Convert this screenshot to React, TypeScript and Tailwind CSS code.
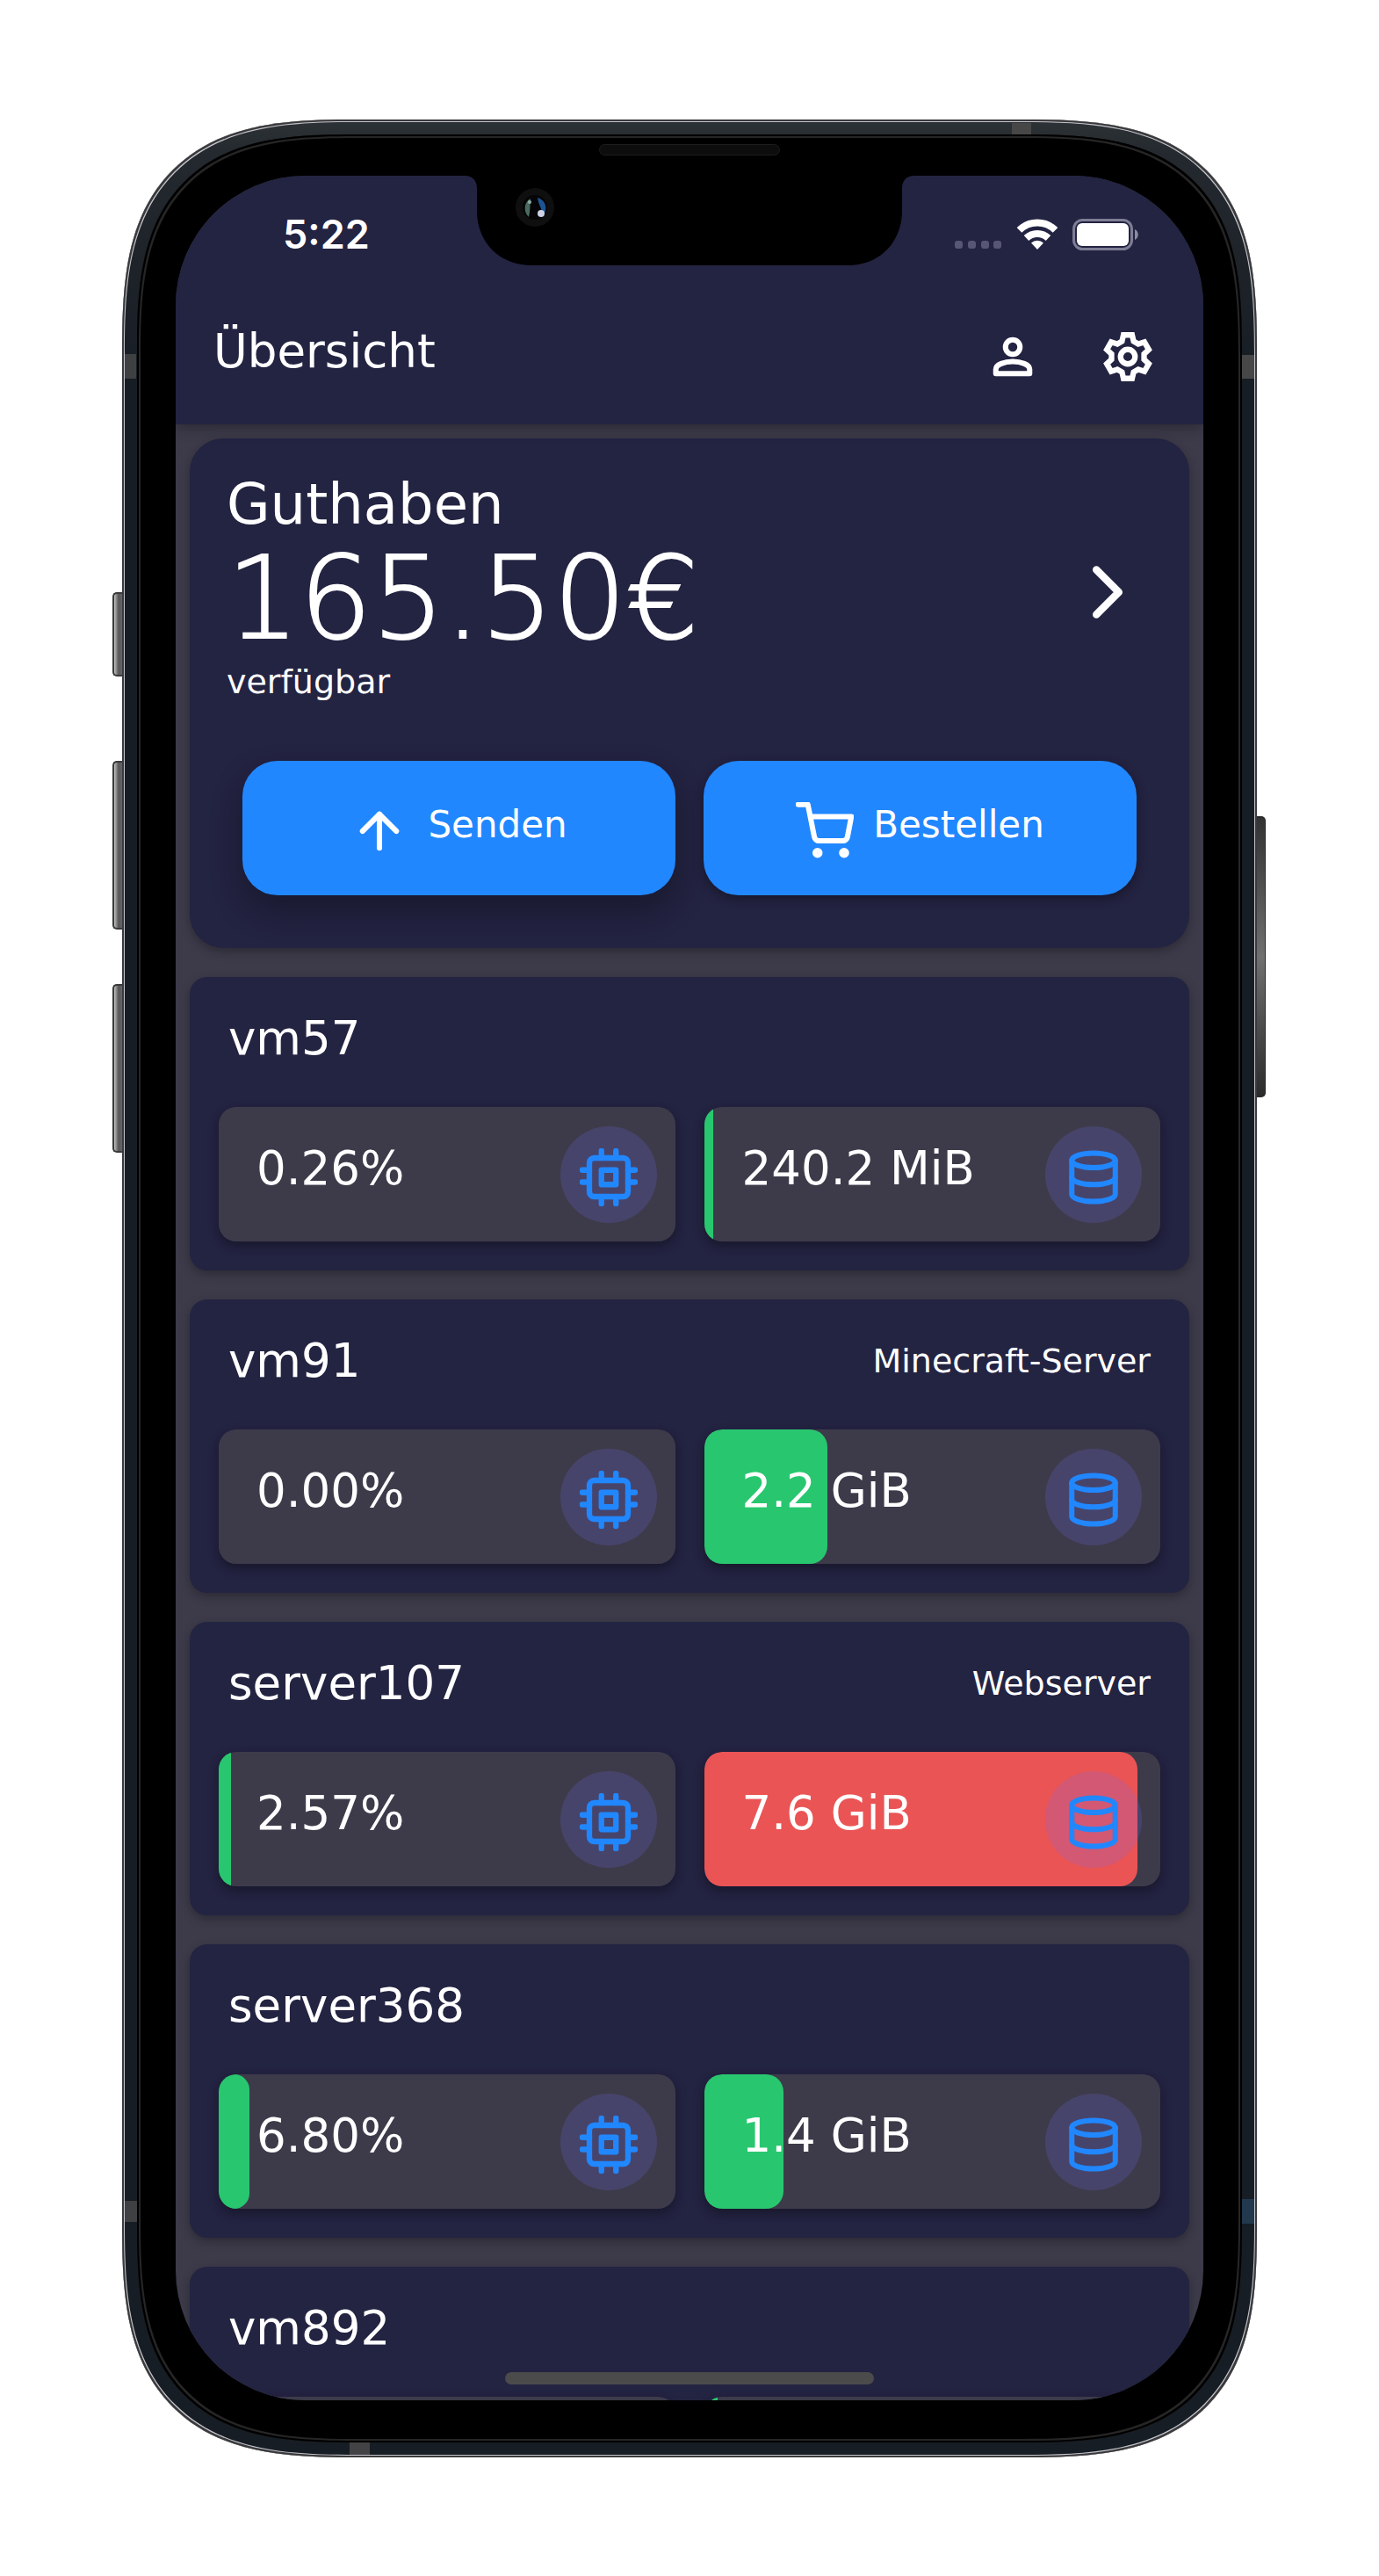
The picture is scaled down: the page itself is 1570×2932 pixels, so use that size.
import React from "react";
import { FiArrowUp, FiChevronRight, FiCpu, FiDatabase, FiShoppingCart } from "react-icons/fi";

type Metric = { value?: string; percent: number; tone?: "green" | "red" };
type Server = { name: string; note?: string; cpu: Metric; memory: Metric };

const servers: Server[] = [
  { name: "vm57", cpu: { value: "0.26%", percent: 0 }, memory: { value: "240.2 MiB", percent: 2 } },
  { name: "vm91", note: "Minecraft-Server", cpu: { value: "0.00%", percent: 0 }, memory: { value: "2.2 GiB", percent: 27 } },
  { name: "server107", note: "Webserver", cpu: { value: "2.57%", percent: 2.6 }, memory: { value: "7.6 GiB", percent: 95, tone: "red" } },
  { name: "server368", cpu: { value: "6.80%", percent: 6.8 }, memory: { value: "1.4 GiB", percent: 17.5 } },
  { name: "vm892", cpu: { percent: 0 }, memory: { percent: 3 } },
];

/* Gear outline: one tooth, repeated every 60 degrees around (12, 12). */
const tooth: [number, number][] = [
  [-2.4, -6.4],
  [-1.8, -9],
  [1.8, -9],
  [2.4, -6.4],
];
const gearPoints = [0, 60, 120, 180, 240, 300]
  .flatMap((deg) => {
    const a = (deg * Math.PI) / 180;
    return tooth.map(([x, y]) => {
      const px = 12 + x * Math.cos(a) - y * Math.sin(a);
      const py = 12 + x * Math.sin(a) + y * Math.cos(a);
      return `${px.toFixed(2)},${py.toFixed(2)}`;
    });
  })
  .join(" ");

function GearIcon() {
  return (
    <svg viewBox="0 0 24 24" className="size-[66px]" fill="none" stroke="currentColor" strokeWidth="2.3" aria-hidden="true">
      <polygon points={gearPoints} strokeLinejoin="miter" />
      <circle cx="12" cy="12" r="3" />
    </svg>
  );
}

function PersonIcon() {
  return (
    <svg viewBox="0 0 24 24" className="size-[66px]" fill="none" stroke="currentColor" strokeWidth="2.2" aria-hidden="true">
      <circle cx="12" cy="8" r="3" />
      <path d="M5 19v-1.8C5 15.2 8.6 14 12 14s7 1.2 7 3.2V19z" strokeLinejoin="round" />
    </svg>
  );
}

function StatusBar() {
  return (
    <div className="flex h-[133px] items-center justify-between pr-[74px] pl-[122px]">
      <span className="font-[Inter,sans-serif] text-[45px] leading-[54px] font-semibold">5:22</span>
      <div className="flex items-center gap-[17px]">
        <svg viewBox="0 0 54 36" className="h-[36px] w-[54px]" fill="#575775" aria-hidden="true">
          <rect x="0" y="25" width="9" height="9" rx="3" />
          <rect x="15" y="25" width="9" height="9" rx="3" />
          <rect x="30" y="25" width="9" height="9" rx="3" />
          <rect x="44" y="25" width="9" height="9" rx="3" />
        </svg>
        <svg viewBox="0 0 46 36" className="h-[36px] w-[46px]" aria-hidden="true">
          <g fill="none" stroke="#fff" strokeWidth="8">
            <path d="M2.5 13a29 29 0 0 1 41 0" />
            <path d="M10.5 22a18 18 0 0 1 25 0" />
          </g>
          <path d="M23 35l-7-7.500a10 10 0 0 1 14 0z" fill="#fff" />
        </svg>
        <svg viewBox="0 0 75 36" className="h-[36px] w-[75px]" aria-hidden="true">
          <rect x="1.500" y="1.500" width="66" height="33" rx="10" fill="none" stroke="#7d7d95" strokeWidth="3" />
          <rect x="5" y="5" width="59" height="26" rx="6" fill="#fff" />
          <path d="M71 12c5 2 5 10 0 12z" fill="#8c8ca0" />
        </svg>
      </div>
    </div>
  );
}

function Header() {
  return (
    <header className="relative z-10 bg-[#232342] pb-[44px] shadow-[0_4px_14px_rgba(0,0,0,0.3)]">
      <StatusBar />
      <div className="flex items-start justify-between pt-[40px] pr-[53px] pl-[43px]">
        <h1 className="text-[53px] leading-[54px]">Übersicht</h1>
        <div className="flex gap-[65px]">
          <button type="button" aria-label="Konto">
            <PersonIcon />
          </button>
          <button type="button" aria-label="Einstellungen">
            <GearIcon />
          </button>
        </div>
      </div>
    </header>
  );
}

function BalanceCard() {
  return (
    <section className="rounded-[38px] bg-[#232342] px-[42px] pb-[60px] shadow-[0_4px_12px_rgba(0,0,0,0.3)]">
      <div className="flex items-center justify-between">
        <div className="pt-[36px] pb-[46px]">
          <h2 className="text-[64px] leading-[78px]">Guthaben</h2>
          <p className="text-[130px] leading-[136px] font-light [-webkit-text-stroke:2px_#fff]">165.50€</p>
          <p className="text-[38px] leading-[54px]">verfügbar</p>
        </div>
        <button type="button" aria-label="Details">
          <FiChevronRight className="size-[102px]" />
        </button>
      </div>
      <div className="mt-[17px] grid grid-cols-2 gap-[32px] px-[18px]">
        <button
          type="button"
          className="flex h-[153px] items-center justify-center gap-[22px] rounded-[40px] bg-[#2187ff] pt-[6px] shadow-[0_18px_36px_rgba(0,0,0,0.3)]"
        >
          <FiArrowUp className="size-[66px] stroke-[2.2]" />
          <span className="pb-[14px] text-[42px] leading-[54px]">Senden</span>
        </button>
        <button
          type="button"
          className="flex h-[153px] items-center justify-center gap-[22px] rounded-[40px] bg-[#2187ff] pt-[6px] shadow-[0_4px_12px_rgba(0,0,0,0.35)]"
        >
          <FiShoppingCart className="size-[66px] stroke-[2.2]" />
          <span className="pb-[14px] text-[42px] leading-[54px]">Bestellen</span>
        </button>
      </div>
    </section>
  );
}

function MetricTile({ metric, kind }: { metric: Metric; kind: "cpu" | "memory" }) {
  const fill = metric.tone === "red" ? "bg-[#ea5455]" : "bg-[#28c76f]";
  const round = metric.percent > 4 ? "rounded-[20px]" : "";
  return (
    <div className="relative flex h-[153px] items-center justify-between overflow-hidden rounded-[20px] bg-[#3d3b4a] pr-[21px] pl-[43px]">
      <div className={`absolute inset-y-0 left-0 ${fill} ${round}`} style={{ width: `${metric.percent}%` }} />
      <span className="relative pb-[14px] text-[53px] leading-[60px] whitespace-nowrap">{metric.value}</span>
      <span className="relative flex size-[110px] shrink-0 items-center justify-center rounded-full bg-[#7367f0]/20 pt-[6px] text-[#2187ff]">
        {kind === "cpu" ? <FiCpu className="size-[66px] stroke-[2.3]" /> : <FiDatabase className="size-[66px] stroke-[2.2]" />}
      </span>
    </div>
  );
}

function ServerCard({ server }: { server: Server }) {
  return (
    <section className="rounded-[20px] bg-[#232342] px-[33px] pb-[33px] shadow-[0_4px_12px_rgba(0,0,0,0.3)]">
      <div className="mb-[8px] flex h-[140px] items-center justify-between px-[11px]">
        <h3 className="text-[53px] leading-[60px]">{server.name}</h3>
        {server.note && <span className="text-[38px] leading-[54px]">{server.note}</span>}
      </div>
      <div className="grid grid-cols-2 gap-[33px]">
        <div className="rounded-[20px] shadow-[0_5px_12px_rgba(0,0,0,0.35)]">
          <MetricTile metric={server.cpu} kind="cpu" />
        </div>
        <div className="rounded-[20px] shadow-[0_5px_12px_rgba(0,0,0,0.35)]">
          <MetricTile metric={server.memory} kind="memory" />
        </div>
      </div>
    </section>
  );
}

function Notch() {
  return (
    <svg viewBox="0 0 512 102" className="absolute top-0 left-1/2 z-20 h-[102px] w-[512px] -translate-x-1/2" aria-hidden="true">
      <path d="M0 0c9 0 14 6 14 14v26c0 36 26 62 62 62h360c36 0 62-26 62-62V14c0-8 5-14 14-14z" fill="#000" />
      <circle cx="80" cy="36" r="22" fill="#0f0f10" />
      <circle cx="80" cy="36" r="14" fill="#050507" />
      <path d="M75 26c-8 4-8 16-2 21 2-7 1-14 2-21z" fill="#4a6b60" />
      <circle cx="74" cy="30" r="2" fill="#8fb0a4" />
      <path d="M83 25c10 3 12 14 6 20-1-8-5-12-6-20z" fill="#1d5594" />
      <circle cx="87" cy="43" r="4" fill="#cfd2e6" />
    </svg>
  );
}

function SideButtons() {
  return (
    <>
      <div className="absolute top-[538px] -left-[11px] h-[96px] w-[12px] rounded-l-[5px] border-2 border-r-0 border-[#3a3a3a] bg-linear-to-r from-[#c4c4c4] via-[#555555] to-[#6b6b6b]" />
      <div className="absolute top-[730px] -left-[11px] h-[192px] w-[12px] rounded-l-[5px] border-2 border-r-0 border-[#3a3a3a] bg-linear-to-r from-[#c4c4c4] via-[#555555] to-[#6b6b6b]" />
      <div className="absolute top-[984px] -left-[11px] h-[192px] w-[12px] rounded-l-[5px] border-2 border-r-0 border-[#3a3a3a] bg-linear-to-r from-[#c4c4c4] via-[#555555] to-[#6b6b6b]" />
      <div className="absolute top-[793px] -right-[10px] h-[320px] w-[12px] rounded-r-[5px] border-y-2 border-r border-[#2a2a2a] bg-linear-to-b from-[#333333] via-[#707070] to-[#2c2c2c]" />
    </>
  );
}

function AntennaBands() {
  return (
    <>
      <div className="absolute top-[4px] left-[1013px] h-[14px] w-[22px] bg-[#474747]" />
      <div className="absolute top-[267px] left-[3px] h-[28px] w-[13px] bg-[#3f4042]" />
      <div className="absolute top-[268px] right-[3px] h-[27px] w-[15px] bg-[#474747]" />
      <div className="absolute bottom-[3px] left-[259px] h-[16px] w-[23px] bg-[#434346]" />
      <div className="absolute bottom-[268px] left-[3px] h-[24px] w-[15px] bg-[#3f4042]" />
      <div className="absolute right-[3px] bottom-[266px] h-[28px] w-[15px] bg-[#22384d]" />
    </>
  );
}

export default function App() {
  return (
    <main className="min-h-screen bg-white px-6 pt-[136px] pb-[135px] font-['DejaVu_Sans',sans-serif] text-white">
      <div className="relative mx-auto w-full max-w-[1292px]">
        <SideButtons />
        <div className="relative rounded-[196px] bg-[linear-gradient(to_bottom,#2d3236,#23292e_40px,#171d24_300px)] p-[17px] shadow-[inset_0_0_0_2px_#3a3a3c,inset_0_0_0_3px_#c4c4cc] supports-[corner-shape:squircle]:rounded-[265px] supports-[corner-shape:squircle]:[corner-shape:superellipse(1.5)]">
          <AntennaBands />
          <div className="relative rounded-[180px] bg-black px-[44px] pt-[47px] pb-[48px] shadow-[inset_0_0_0_2px_#000,inset_0_0_0_4px_#262626] supports-[corner-shape:squircle]:rounded-[248px] supports-[corner-shape:squircle]:[corner-shape:superellipse(1.5)]">
            <div className="absolute top-[11px] left-1/2 h-[13px] w-[206px] -translate-x-1/2 rounded-full border border-[#1d1d1d] bg-[#0d0d0d]" />
            <div className="relative aspect-[1170/2532] overflow-hidden rounded-[148px] bg-[#3d3b4a]">
              <Notch />
              <Header />
              <div className="flex flex-col gap-[33px] px-[16px] pt-[16px]">
                <BalanceCard />
                {servers.map((server) => (
                  <ServerCard key={server.name} server={server} />
                ))}
              </div>
              <div className="absolute bottom-[18px] left-1/2 z-10 h-[14px] w-[420px] -translate-x-1/2 rounded-full bg-[#4b4b4b]" />
            </div>
          </div>
        </div>
      </div>
    </main>
  );
}
